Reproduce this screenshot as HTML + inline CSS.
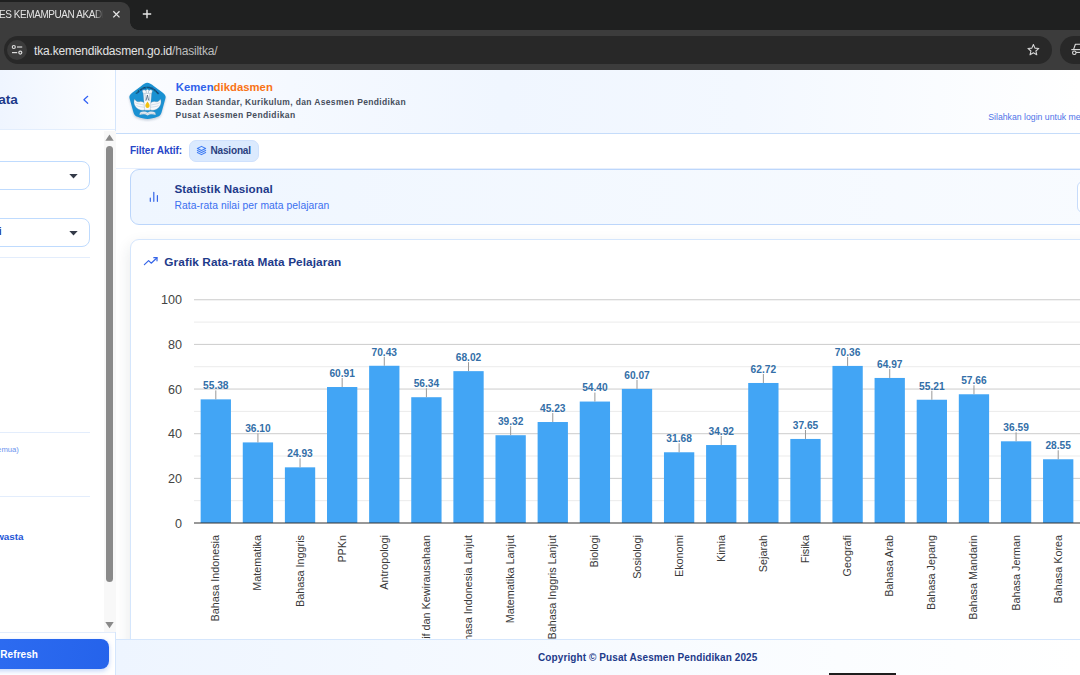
<!DOCTYPE html>
<html lang="id">
<head>
<meta charset="utf-8">
<title>TES KEMAMPUAN AKADEMIK</title>
<style>
*{box-sizing:border-box;margin:0;padding:0}
html,body{width:1080px;height:675px;overflow:hidden;background:#fff;font-family:"Liberation Sans",sans-serif}
#root{position:relative;width:1080px;height:675px;overflow:hidden}
.abs{position:absolute}
/* browser chrome */
#tabstrip{left:0;top:0;width:1080px;height:31px;background:#1f2020}
#tab{left:-20px;top:2.100px;width:150px;height:28.900px;background:#3c3c3c;border-radius:9px 9px 0 0}
#tabcurve{left:130px;top:22.400px;width:8px;height:8px;background:radial-gradient(circle at 100% 0,#1f2020 7.5px,#3c3c3c 8px)}
#toolbar{left:0;top:30.400px;width:1080px;height:39.400px;background:#3c3c3c}
#urlpill{left:4px;top:36px;width:1048px;height:28px;border-radius:14px;background:#282828}
#sitecirc{left:7.200px;top:39.900px;width:20px;height:20.200px;border-radius:10.100px;background:#3b3b3b}
#incog{left:1060px;top:36px;width:40px;height:28px;border-radius:14px;background:#282828}
/* page */
#page{left:0;top:70px;width:1080px;height:605px;background:#fff}
#side{left:0;top:70px;width:116px;height:605px;background:#fff;border-right:1px solid #d5e6fc}
#sidehead{left:0;top:70px;width:115px;height:60px;background:linear-gradient(90deg,#eff5ff,#fdfeff);border-bottom:1px solid #e3eefd}
#mainhead{left:116px;top:70px;width:964px;height:63.500px;background:linear-gradient(90deg,#fbfcff 0%,#f5f9ff 18%,#f0f6ff 40%,#f3f8ff 65%,#ffffff 100%);border-bottom:1.500px solid #c5dcfa}
#gutter{left:116px;top:134px;width:14px;height:505px;background:linear-gradient(90deg,#f1f3f6,#ffffff)}
.sel{left:-20px;width:109.500px;height:29px;border:1.500px solid #bfdbfe;border-radius:8px;background:#fff}
.hr{left:0;width:89.500px;height:1px;background:#e3edfc}
#scroll{left:103.500px;top:131px;width:12px;height:501px;background:#f8f8f8}
#thumb{left:106px;top:145.500px;width:7px;height:436.500px;border-radius:3.500px;background:#8a8a8a}
#refbtn{left:-40px;top:639px;width:149px;height:30px;border-radius:8px;background:linear-gradient(100deg,#2f6ef2,#2563eb);box-shadow:0 2px 5px rgba(37,99,235,.28)}
#footer{left:116px;top:639px;width:964px;height:36px;background:linear-gradient(90deg,#eef5ff,#fbfdff 75%,#ffffff);border-top:1px solid #d5e6fc}
#statcard{left:129.500px;top:168.500px;width:980px;height:56px;border:1.200px solid #bcd6fb;border-radius:9px;background:linear-gradient(90deg,#eff6ff,#f8fbff)}
#chartcard{left:13.500px;top:105.200px;width:980px;height:460px;border:1.200px solid #d5e6fc;border-radius:9px;background:#fff;box-shadow:0 6px 16px rgba(30,41,59,.11)}
#chip{left:189px;top:140px;width:69.500px;height:22px;border:1px solid #cfe1fd;border-radius:7px;background:#dbeafe}
.t{white-space:nowrap;line-height:1}
svg text.ax{font-family:"Liberation Sans",sans-serif;font-size:12.600px;fill:#444}
svg text.an{font-family:"Liberation Sans",sans-serif;font-size:10.200px;font-weight:bold;fill:#336fa8}
svg text.lb{font-family:"Liberation Sans",sans-serif;font-size:10.800px;fill:#3a3a3a}
</style>
</head>
<body>
<div id="root">
 <div class="abs" id="page"></div>

 <!-- sidebar -->
 <div class="abs" id="side"></div>
 <div class="abs" id="sidehead"></div>
 <div class="abs t" id="ata" style="right:1062.10px;top:92.69px;font-size:13.6px;font-weight:700;color:#1e3a8a;letter-spacing:0.000px;">ata</div>
 <svg class="abs" style="left:81px;top:94px" width="10" height="12" viewBox="0 0 10 12"><path d="M6.700 2.300 L2.900 5.800 L6.700 9.300" fill="none" stroke="#3060f5" stroke-width="1.200" stroke-linecap="round" stroke-linejoin="round"/></svg>
 <div class="abs sel" style="top:161px"></div>
 <div class="abs sel" style="top:218px"></div>
 <svg class="abs" style="left:69px;top:174px" width="9" height="5" viewBox="0 0 9 5"><path d="M0.300 0 L8.700 0 L4.500 4.600 Z" fill="#333a48"/></svg>
 <svg class="abs" style="left:69px;top:230.500px" width="9" height="5" viewBox="0 0 9 5"><path d="M0.300 0 L8.700 0 L4.500 4.600 Z" fill="#333a48"/></svg>
 <div class="abs t" id="seli" style="right:1078.60px;top:226.84px;font-size:10px;font-weight:700;color:#1e3a8a;letter-spacing:0.000px;">i</div>
 <div class="abs hr" style="top:257px"></div>
 <div class="abs hr" style="top:432px"></div>
 <div class="abs hr" style="top:495.500px"></div>
 <div class="abs t" id="mua" style="right:1061.10px;top:445.98px;font-size:7.7px;font-weight:400;color:#6b93ee;letter-spacing:0.000px;">emua)</div>
 <div class="abs t" id="wasta" style="right:1056.40px;top:531.82px;font-size:9.9px;font-weight:700;color:#2456d6;letter-spacing:0.000px;">wasta</div>
 <div class="abs" id="scroll"></div>
 <div class="abs" id="thumb"></div>
 <svg class="abs" style="left:104px;top:134px" width="11" height="8" viewBox="0 0 11 8"><path d="M1.300 6.800 L5.500 0.600 L9.700 6.800 Z" fill="#8a8a8a"/></svg>
 <svg class="abs" style="left:104px;top:621px" width="11" height="8" viewBox="0 0 11 8"><path d="M1.300 1 L5.500 7.200 L9.700 1 Z" fill="#8a8a8a"/></svg>
 <div class="abs" style="left:0;top:632px;width:115px;height:1px;background:#e3edfc"></div>
 <div class="abs" id="refbtn"></div>
 <div class="abs t" id="refresh" style="left:0.30px;top:649.53px;font-size:10px;font-weight:700;color:#ffffff;letter-spacing:0.075px;">Refresh</div>

 <!-- main header -->
 <div class="abs" id="mainhead"></div>
  <svg class="abs" style="left:127px;top:80px" width="42" height="42" viewBox="0 0 42 42">
  <defs>
   <filter id="ls" x="-20%" y="-20%" width="140%" height="150%"><feGaussianBlur stdDeviation="1.200"/></filter>
   <path id="arc" d="M8.700 16 Q20.500 0.400 32.300 16"/>
   <path id="pent" d="M20.200 2.700 C22 2.700 24.500 4.200 27 6.200 L35.500 12.600 C37.600 14.200 39 15.600 38.600 17.800 L34.600 32.200 C33.800 35 32.600 36 30.400 36.800 C27 38.200 23.500 38.900 20.500 38.900 C17.500 38.900 14 38.200 10.600 36.800 C8.400 36 7.200 35 6.400 32.200 L2.400 17.800 C2 15.600 3.400 14.200 5.500 12.600 L14 6.200 C16.500 4.200 18.400 2.700 20.200 2.700 Z"/>
  </defs>
  <use href="#pent" fill="#8fa0b5" opacity=".5" filter="url(#ls)" transform="translate(0,1.500)"/>
  <use href="#pent" fill="#1a91d2"/>
  <text font-family="'Liberation Sans',sans-serif" font-size="2.350" font-weight="bold" fill="#10294a" stroke="#10294a" stroke-width=".100" letter-spacing="0"><textPath href="#arc" startOffset="50%" text-anchor="middle">TUT WURI HANDAYANI</textPath></text>
  <!-- wings -->
  <path d="M7.600 19 C6 22.500 7.400 27.200 12 29.600 C14.600 30.800 17.600 30.400 19.200 29 L18.200 24 C16.600 21.600 14.200 21.200 12.600 21.700 C10.600 22.200 8.800 21.300 7.600 19 Z" fill="#f6f9fc" stroke="#6d8aa6" stroke-width=".35"/>
  <path d="M33.400 19 C35 22.500 33.600 27.200 29 29.600 C26.400 30.800 23.400 30.400 21.800 29 L22.800 24 C24.400 21.600 26.800 21.200 28.400 21.700 C30.400 22.200 32.200 21.300 33.400 19 Z" fill="#f6f9fc" stroke="#6d8aa6" stroke-width=".35"/>
  <path d="M8.200 22.600 C10.400 24.200 13.400 24 16.800 25 M9.400 25.600 C11.600 26.800 14.400 26.800 17.400 27.200 M32.800 22.600 C30.600 24.200 27.600 24 24.200 25 M31.600 25.600 C29.400 26.800 26.600 26.800 23.600 27.200" stroke="#aebfd0" stroke-width=".5" fill="none"/>
  <!-- tower -->
  <path d="M15.200 10.800 L17 9.700 L18.700 10.500 L20.400 9.300 L22.100 10.500 L23.800 9.700 L25.500 10.800 L24.600 13.600 L23.200 30.200 L17.700 30.200 L16.200 13.600 Z" fill="#f6f9fc" stroke="#6d8aa6" stroke-width=".3"/>
  <path d="M16.600 13.400 H24.300 M17.900 14 L18.600 21 M22.900 14 L22.300 21 M19.300 10.600 V13 M21.500 10.600 V13" stroke="#8fa6bd" stroke-width=".5" fill="none"/>
  <path d="M19.100 20.400 L20.400 15 L21.700 20.400" stroke="#3c5672" stroke-width=".7" fill="#dfe8f0" stroke-linejoin="round"/>
  <!-- flame -->
  <path d="M20.500 21.400 C22.100 23.400 22.700 24.700 22.600 25.800 C22.500 27.200 21.600 28 20.500 28 C19.400 28 18.500 27.200 18.400 25.800 C18.300 24.700 18.900 23.400 20.500 21.400 Z" fill="#f1c011"/>
  <!-- book -->
  <path d="M13 32.400 C15.600 31 18.900 31.300 20.600 32.600 C22.300 31.300 25.600 31 28.200 32.400 L28.700 34.900 C26 33.700 22.700 34 20.600 35.400 C18.500 34 15.200 33.700 12.500 34.900 Z" fill="#f6f9fc" stroke="#6d8aa6" stroke-width=".3"/>
  <path d="M13.600 33.600 C16.100 32.700 18.900 32.900 20.600 34.100 C22.300 32.900 25.100 32.700 27.600 33.600" stroke="#8fa6bd" stroke-width=".45" fill="none"/>
 </svg>

 <div class="abs t" id="kemen" style="left:175.80px;top:81.73px;font-size:11.3px;font-weight:700;color:#2f62ea;letter-spacing:0.024px;"><span style="color:#2f62ea">Kemen</span><span style="color:#f97316">dikdasmen</span></div>
 <div class="abs t" id="badan" style="left:175.60px;top:98.20px;font-size:8.5px;font-weight:700;color:#464e5c;letter-spacing:0.348px;">Badan Standar, Kurikulum, dan Asesmen Pendidikan</div>
 <div class="abs t" id="pusat" style="left:175.60px;top:111.00px;font-size:8.5px;font-weight:700;color:#464e5c;letter-spacing:0.382px;">Pusat Asesmen Pendidikan</div>
 <div class="abs t" id="silahkan" style="left:988.30px;top:112.84px;font-size:8.7px;font-weight:400;color:#4f74e8;letter-spacing:0.000px;">Silahkan login untuk mengakses</div>

 <!-- filter row -->
 <div class="abs" style="left:116px;top:168px;width:964px;height:1px;background:#e6effd"></div>
 <div class="abs t" id="filter" style="left:129.90px;top:145.99px;font-size:10.05px;font-weight:700;color:#2746c8;letter-spacing:-0.030px;">Filter Aktif:</div>
 <div class="abs" id="chip"></div>
 <svg class="abs" style="left:196px;top:145.300px" width="11" height="11" viewBox="0 0 24 24" fill="none" stroke="#3f7cf3" stroke-width="2.400" stroke-linecap="round" stroke-linejoin="round"><path d="M12 3 L21 7.500 L12 12 L3 7.500 Z"/><path d="M3 12 L12 16.500 L21 12"/><path d="M3 16.500 L12 21 L21 16.500"/></svg>
 <div class="abs t" id="nasional" style="left:210.40px;top:145.99px;font-size:10.05px;font-weight:700;color:#2a3f80;letter-spacing:-0.170px;">Nasional</div>

 <!-- stat card -->
 <div class="abs" id="statcard"></div>
 <svg class="abs" style="left:148px;top:190px" width="12" height="13" viewBox="0 0 12 13" fill="none" stroke="#3565e8" stroke-width="1.200" stroke-linecap="round"><path d="M2.300 8 V11.300 M5.800 2.300 V11.300 M9.400 5.500 V11.300"/></svg>
 <div class="abs t" id="stat" style="left:174.50px;top:183.28px;font-size:11.6px;font-weight:700;color:#1e3a8a;letter-spacing:0.091px;">Statistik Nasional</div>
 <div class="abs t" id="rata" style="left:174.50px;top:200.68px;font-size:10.3px;font-weight:400;color:#3b6ff0;letter-spacing:0.060px;">Rata-rata nilai per mata pelajaran</div>
 <div class="abs" style="left:1077px;top:181px;width:30px;height:32px;border:1.200px solid #c7dcfb;border-radius:6px;background:#fff"></div>

 <!-- chart card -->
 <div class="abs" style="left:116px;top:134px;width:964px;height:505px;overflow:hidden"><div class="abs" id="chartcard"></div></div>
 <svg class="abs" style="left:143px;top:256px" width="16" height="11" viewBox="0 0 16 11" fill="none" stroke="#3565e8" stroke-width="1.200" stroke-linecap="round" stroke-linejoin="round"><path d="M1.400 8.600 L5.600 4.600 L8.200 7.200 L14 1.700"/><path d="M10.800 1.700 H14 V4.800"/></svg>
 <div class="abs t" id="grafik" style="left:164.30px;top:256.81px;font-size:11.8px;font-weight:700;color:#1e3a8a;letter-spacing:0.086px;">Grafik Rata-rata Mata Pelajaran</div>
 <svg class="abs" style="left:0;top:0" width="1080" height="639" viewBox="0 0 1080 639">
<rect x="194.0" y="500.18" width="886.0" height="1" fill="#ebebeb"/>
<rect x="194.0" y="477.85" width="886.0" height="1" fill="#cccccc"/>
<rect x="194.0" y="455.52" width="886.0" height="1" fill="#ebebeb"/>
<rect x="194.0" y="433.20" width="886.0" height="1" fill="#cccccc"/>
<rect x="194.0" y="410.88" width="886.0" height="1" fill="#ebebeb"/>
<rect x="194.0" y="388.55" width="886.0" height="1" fill="#cccccc"/>
<rect x="194.0" y="366.23" width="886.0" height="1" fill="#ebebeb"/>
<rect x="194.0" y="343.90" width="886.0" height="1" fill="#cccccc"/>
<rect x="194.0" y="321.58" width="886.0" height="1" fill="#ebebeb"/>
<rect x="194.0" y="299.25" width="886.0" height="1" fill="#cccccc"/>
<text x="182" y="527.60" text-anchor="end" class="ax">0</text>
<text x="182" y="482.95" text-anchor="end" class="ax">20</text>
<text x="182" y="438.30" text-anchor="end" class="ax">40</text>
<text x="182" y="393.65" text-anchor="end" class="ax">60</text>
<text x="182" y="349.00" text-anchor="end" class="ax">80</text>
<text x="182" y="304.35" text-anchor="end" class="ax">100</text>
<rect x="200.65" y="399.36" width="30.3" height="123.64" fill="#42a5f5"/>
<rect x="215.30" y="390.36" width="1" height="9" fill="#999999"/>
<text x="215.80" y="389.16" text-anchor="middle" class="an">55.38</text>
<text transform="translate(219.30,535) rotate(-90)" text-anchor="end" class="lb">Bahasa Indonesia</text>
<rect x="242.77" y="442.41" width="30.3" height="80.59" fill="#42a5f5"/>
<rect x="257.42" y="433.41" width="1" height="9" fill="#999999"/>
<text x="257.92" y="432.21" text-anchor="middle" class="an">36.10</text>
<text transform="translate(261.42,535) rotate(-90)" text-anchor="end" class="lb">Matematika</text>
<rect x="284.89" y="467.34" width="30.3" height="55.66" fill="#42a5f5"/>
<rect x="299.54" y="458.34" width="1" height="9" fill="#999999"/>
<text x="300.04" y="457.14" text-anchor="middle" class="an">24.93</text>
<text transform="translate(303.54,535) rotate(-90)" text-anchor="end" class="lb">Bahasa Inggris</text>
<rect x="327.01" y="387.02" width="30.3" height="135.98" fill="#42a5f5"/>
<rect x="341.66" y="378.02" width="1" height="9" fill="#999999"/>
<text x="342.16" y="376.82" text-anchor="middle" class="an">60.91</text>
<text transform="translate(345.66,535) rotate(-90)" text-anchor="end" class="lb">PPKn</text>
<rect x="369.13" y="365.77" width="30.3" height="157.23" fill="#42a5f5"/>
<rect x="383.78" y="356.77" width="1" height="9" fill="#999999"/>
<text x="384.28" y="355.57" text-anchor="middle" class="an">70.43</text>
<text transform="translate(387.78,535) rotate(-90)" text-anchor="end" class="lb">Antropologi</text>
<rect x="411.25" y="397.22" width="30.3" height="125.78" fill="#42a5f5"/>
<rect x="425.90" y="388.22" width="1" height="9" fill="#999999"/>
<text x="426.40" y="387.02" text-anchor="middle" class="an">56.34</text>
<text transform="translate(429.90,535) rotate(-90)" text-anchor="end" class="lb">Projek Kreatif dan Kewirausahaan</text>
<rect x="453.37" y="371.15" width="30.3" height="151.85" fill="#42a5f5"/>
<rect x="468.02" y="362.15" width="1" height="9" fill="#999999"/>
<text x="468.52" y="360.95" text-anchor="middle" class="an">68.02</text>
<text transform="translate(472.02,535) rotate(-90)" text-anchor="end" class="lb">Bahasa Indonesia Lanjut</text>
<rect x="495.49" y="435.22" width="30.3" height="87.78" fill="#42a5f5"/>
<rect x="510.14" y="426.22" width="1" height="9" fill="#999999"/>
<text x="510.64" y="425.02" text-anchor="middle" class="an">39.32</text>
<text transform="translate(514.14,535) rotate(-90)" text-anchor="end" class="lb">Matematika Lanjut</text>
<rect x="537.61" y="422.02" width="30.3" height="100.98" fill="#42a5f5"/>
<rect x="552.26" y="413.02" width="1" height="9" fill="#999999"/>
<text x="552.76" y="411.82" text-anchor="middle" class="an">45.23</text>
<text transform="translate(556.26,535) rotate(-90)" text-anchor="end" class="lb">Bahasa Inggris Lanjut</text>
<rect x="579.73" y="401.55" width="30.3" height="121.45" fill="#42a5f5"/>
<rect x="594.38" y="392.55" width="1" height="9" fill="#999999"/>
<text x="594.88" y="391.35" text-anchor="middle" class="an">54.40</text>
<text transform="translate(598.38,535) rotate(-90)" text-anchor="end" class="lb">Biologi</text>
<rect x="621.85" y="388.89" width="30.3" height="134.11" fill="#42a5f5"/>
<rect x="636.50" y="379.89" width="1" height="9" fill="#999999"/>
<text x="637.00" y="378.69" text-anchor="middle" class="an">60.07</text>
<text transform="translate(640.50,535) rotate(-90)" text-anchor="end" class="lb">Sosiologi</text>
<rect x="663.97" y="452.27" width="30.3" height="70.73" fill="#42a5f5"/>
<rect x="678.62" y="443.27" width="1" height="9" fill="#999999"/>
<text x="679.12" y="442.07" text-anchor="middle" class="an">31.68</text>
<text transform="translate(682.62,535) rotate(-90)" text-anchor="end" class="lb">Ekonomi</text>
<rect x="706.09" y="445.04" width="30.3" height="77.96" fill="#42a5f5"/>
<rect x="720.74" y="436.04" width="1" height="9" fill="#999999"/>
<text x="721.24" y="434.84" text-anchor="middle" class="an">34.92</text>
<text transform="translate(724.74,535) rotate(-90)" text-anchor="end" class="lb">Kimia</text>
<rect x="748.21" y="382.98" width="30.3" height="140.02" fill="#42a5f5"/>
<rect x="762.86" y="373.98" width="1" height="9" fill="#999999"/>
<text x="763.36" y="372.78" text-anchor="middle" class="an">62.72</text>
<text transform="translate(766.86,535) rotate(-90)" text-anchor="end" class="lb">Sejarah</text>
<rect x="790.33" y="438.95" width="30.3" height="84.05" fill="#42a5f5"/>
<rect x="804.98" y="429.95" width="1" height="9" fill="#999999"/>
<text x="805.48" y="428.75" text-anchor="middle" class="an">37.65</text>
<text transform="translate(808.98,535) rotate(-90)" text-anchor="end" class="lb">Fisika</text>
<rect x="832.45" y="365.92" width="30.3" height="157.08" fill="#42a5f5"/>
<rect x="847.10" y="356.92" width="1" height="9" fill="#999999"/>
<text x="847.60" y="355.72" text-anchor="middle" class="an">70.36</text>
<text transform="translate(851.10,535) rotate(-90)" text-anchor="end" class="lb">Geografi</text>
<rect x="874.57" y="377.95" width="30.3" height="145.05" fill="#42a5f5"/>
<rect x="889.22" y="368.95" width="1" height="9" fill="#999999"/>
<text x="889.72" y="367.75" text-anchor="middle" class="an">64.97</text>
<text transform="translate(893.22,535) rotate(-90)" text-anchor="end" class="lb">Bahasa Arab</text>
<rect x="916.69" y="399.74" width="30.3" height="123.26" fill="#42a5f5"/>
<rect x="931.34" y="390.74" width="1" height="9" fill="#999999"/>
<text x="931.84" y="389.54" text-anchor="middle" class="an">55.21</text>
<text transform="translate(935.34,535) rotate(-90)" text-anchor="end" class="lb">Bahasa Jepang</text>
<rect x="958.81" y="394.27" width="30.3" height="128.73" fill="#42a5f5"/>
<rect x="973.46" y="385.27" width="1" height="9" fill="#999999"/>
<text x="973.96" y="384.07" text-anchor="middle" class="an">57.66</text>
<text transform="translate(977.46,535) rotate(-90)" text-anchor="end" class="lb">Bahasa Mandarin</text>
<rect x="1000.93" y="441.31" width="30.3" height="81.69" fill="#42a5f5"/>
<rect x="1015.58" y="432.31" width="1" height="9" fill="#999999"/>
<text x="1016.08" y="431.11" text-anchor="middle" class="an">36.59</text>
<text transform="translate(1019.58,535) rotate(-90)" text-anchor="end" class="lb">Bahasa Jerman</text>
<rect x="1043.05" y="459.26" width="30.3" height="63.74" fill="#42a5f5"/>
<rect x="1057.70" y="450.26" width="1" height="9" fill="#999999"/>
<text x="1058.20" y="449.06" text-anchor="middle" class="an">28.55</text>
<text transform="translate(1061.70,535) rotate(-90)" text-anchor="end" class="lb">Bahasa Korea</text>
<rect x="194.0" y="522.5" width="886.0" height="1" fill="#333333"/>
 </svg>

 <!-- footer -->
 <div class="abs" id="footer"></div>
 <div class="abs t" id="copy" style="left:538.00px;top:652.83px;font-size:10px;font-weight:700;color:#1e3a8a;letter-spacing:0.097px;">Copyright © Pusat Asesmen Pendidikan 2025</div>
 <div class="abs" style="left:828.500px;top:673.400px;width:67.500px;height:2px;background:#1e1e1e"></div>

 <!-- browser chrome -->
 <div class="abs" id="tabstrip"></div>
 <div class="abs" id="tab"></div>
 <div class="abs" id="tabcurve"></div>
 <div class="abs t" id="tabtitle" style="left:-6.75px;top:9.64px;font-size:10px;font-weight:400;color:#e3e3e3;letter-spacing:-0.425px;width:110.25px;overflow:hidden;-webkit-mask-image:linear-gradient(90deg,#000 91.4%,transparent 99.5%);mask-image:linear-gradient(90deg,#000 91.4%,transparent 99.5%);">TES KEMAMPUAN AKADEMIK</div>
 <svg class="abs" style="left:112px;top:10px" width="9" height="9" viewBox="0 0 9 9"><path d="M1.300 1.200 L7.500 7.400 M7.500 1.200 L1.300 7.400" stroke="#e6e6e6" stroke-width="1.300" fill="none"/></svg>
 <svg class="abs" style="left:141px;top:8px" width="12" height="12" viewBox="0 0 12 12"><path d="M6 1.800 V10.200 M1.800 6 H10.200" stroke="#e6e6e6" stroke-width="1.400" fill="none"/></svg>
 <div class="abs" id="toolbar"></div>
 <div class="abs" id="urlpill"></div>
 <div class="abs" id="sitecirc"></div>
 <svg class="abs" style="left:11px;top:44px" width="13" height="12" viewBox="0 0 13 12" fill="none" stroke="#dcdcdc" stroke-width="1.200"><circle cx="2.800" cy="3" r="1.500"/><path d="M6 3 H11.200"/><circle cx="9.300" cy="8.600" r="1.500"/><path d="M1 8.600 H6.200"/></svg>
 <div class="abs t" id="url" style="left:34.10px;top:44.64px;font-size:12px;font-weight:400;color:#e6e6e6;letter-spacing:-0.200px;"><span style="color:#e2e2e2">tka.kemendikdasmen.go.id</span><span style="color:#bdbdbd">/hasiltka/</span></div>
 <svg class="abs" style="left:1026px;top:43px" width="15" height="14" viewBox="0 0 15 14"><path d="M7.400 1.500 L8.950 5.100 L12.850 5.450 L9.900 8 L10.780 11.800 L7.400 9.800 L4.020 11.800 L4.900 8 L1.950 5.450 L5.850 5.100 Z" fill="none" stroke="#d6d6d6" stroke-width="1.100" stroke-linejoin="round"/></svg>
 <div class="abs" id="incog"></div>
 <svg class="abs" style="left:1070px;top:42px" width="16" height="16" viewBox="0 0 16 16" fill="none" stroke="#dedede" stroke-width="1.100" stroke-linejoin="round"><path d="M1.300 7.600 H15.300"/><path d="M3.600 7.400 L5.400 2.300 H11.200 L13 7.400"/><circle cx="4.300" cy="10.700" r="1.750"/><circle cx="12.300" cy="10.700" r="1.750"/><path d="M6 10.400 H10.600"/></svg>
</div>
</body>
</html>
